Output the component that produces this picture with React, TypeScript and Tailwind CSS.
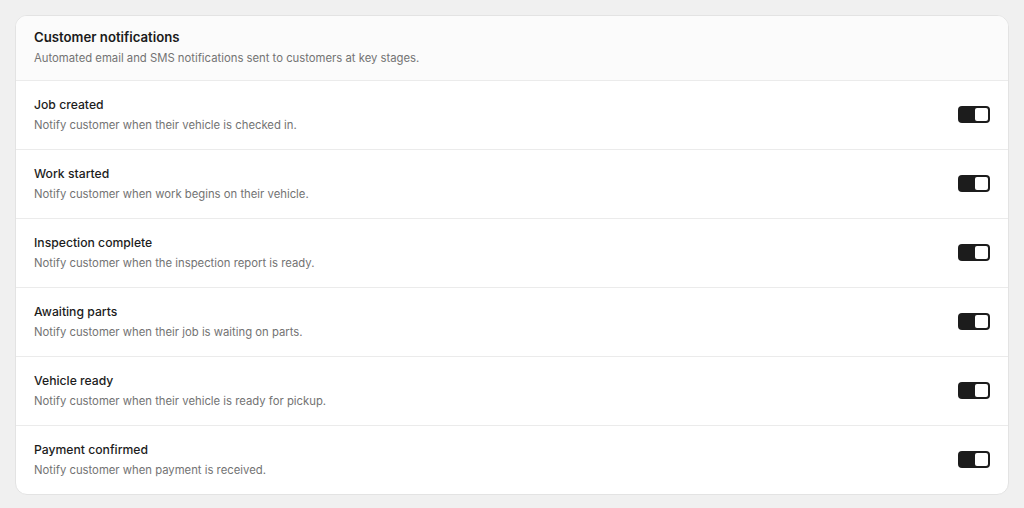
import { useState } from "react";

type Stage = {
  id: string;
  title: string;
  description: string;
};

const stages: Stage[] = [
  { id: "job-created", title: "Job created", description: "Notify customer when their vehicle is checked in." },
  { id: "work-started", title: "Work started", description: "Notify customer when work begins on their vehicle." },
  { id: "inspection", title: "Inspection complete", description: "Notify customer when the inspection report is ready." },
  { id: "parts", title: "Awaiting parts", description: "Notify customer when their job is waiting on parts." },
  { id: "ready", title: "Vehicle ready", description: "Notify customer when their vehicle is ready for pickup." },
  { id: "payment", title: "Payment confirmed", description: "Notify customer when payment is received." },
];

function Toggle({ on, onChange }: { on: boolean; onChange: () => void }) {
  return (
    <button
      type="button"
      role="switch"
      aria-checked={on}
      onClick={onChange}
      className={`flex h-[17px] w-[32px] shrink-0 items-center rounded-[4px] p-[2px] ${
        on ? "justify-end bg-[#1c1c1c]" : "justify-start bg-[#d4d4d4]"
      }`}
    >
      <span className="block h-[13px] w-[13px] rounded-[2px] bg-white" />
    </button>
  );
}

export default function App() {
  const [enabled, setEnabled] = useState<Record<string, boolean>>(
    Object.fromEntries(stages.map((s) => [s.id, true])),
  );

  return (
    <div
      className="min-h-[508px] bg-[#f0f0f0] pl-[15px] pr-[15px] pt-[15px]"
      style={{ fontFamily: "Inter, 'Noto Sans', sans-serif" }}
    >
      <div className="overflow-hidden rounded-xl border border-[#e3e3e3] bg-white">
        <div className="border-b border-[#ebebeb] bg-[#fbfbfb] px-[18px] pb-[14px] pt-[11px]">
          <h2 className="text-[13.2px] leading-5 font-semibold text-[#1a1a1a]">Customer notifications</h2>
          <p className="mt-[3px] text-[11.3px] leading-4 text-[#737373]">
            Automated email and SMS notifications sent to customers at key stages.
          </p>
        </div>
        {stages.map((stage, i) => (
          <div
            key={stage.id}
            className={`flex items-center justify-between px-[18px] pb-4 pt-[14px] ${
              i < stages.length - 1 ? "border-b border-[#ebebeb]" : ""
            }`}
          >
            <div>
              <div className="text-[12.2px] leading-5 font-medium text-[#1c1c1c]">{stage.title}</div>
              <div className="mt-[2px] text-[11.3px] leading-4 text-[#737373]">{stage.description}</div>
            </div>
            <Toggle
              on={enabled[stage.id]}
              onChange={() => setEnabled((prev) => ({ ...prev, [stage.id]: !prev[stage.id] }))}
            />
          </div>
        ))}
      </div>
    </div>
  );
}
